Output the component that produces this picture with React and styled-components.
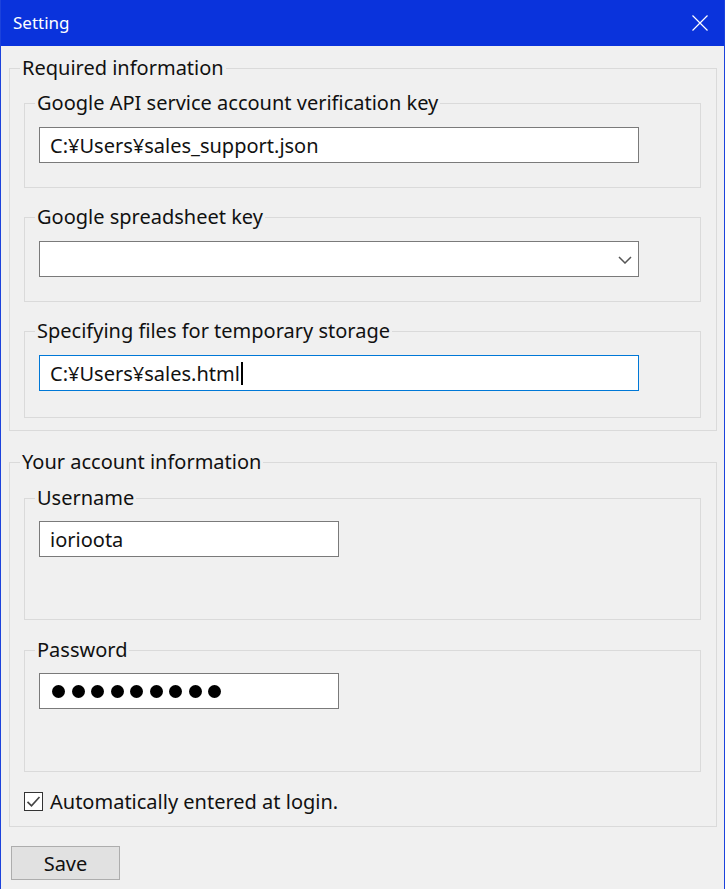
import styled, { createGlobalStyle } from 'styled-components';

////////////////////////////////////////////////////
//////////////////// COMPONENT /////////////////////
////////////////////////////////////////////////////
export default function App() {
   return (
      <>
         <GlobalStyle />
         <Window>
            <TitleBar>
               <Title>Setting</Title>
               <CloseBtn aria-label="Close">
                  <svg width="16" height="16" viewBox="0 0 16 16">
                     <path d="M0.5 0.5L15.5 15.5M15.5 0.5L0.5 15.5" stroke="#fff" strokeWidth="1.2" />
                  </svg>
               </CloseBtn>
            </TitleBar>
            <Body>
               <Group $pad="11px 15px 12px 14px">
                  <Legend>Required information</Legend>
                  <Stack $gap={17}>
                     <Group $pad="12px 14px 24px 14px">
                        <Legend>Google API service account verification key</Legend>
                        <Field $width={600}>C:¥Users¥sales_support.json</Field>
                     </Group>
                     <Group $pad="12px 14px 24px 14px">
                        <Legend>Google spreadsheet key</Legend>
                        <Field $width={600}>
                           <Chevron width="14" height="8" viewBox="0 0 14 8">
                              <path d="M1 1L7 7L13 1" fill="none" stroke="#555" strokeWidth="1.5" />
                           </Chevron>
                        </Field>
                     </Group>
                     <Group $pad="12px 14px 26px 14px">
                        <Legend>Specifying files for temporary storage</Legend>
                        <Field $width={600} $focused>C:¥Users¥sales.html<Caret /></Field>
                     </Group>
                  </Stack>
               </Group>

               <Group $pad="12px 15px 13px 14px" $mt={19}>
                  <Legend>Your account information</Legend>
                  <Stack $gap={18}>
                     <Group $pad="11px 14px 62px 14px">
                        <Legend>Username</Legend>
                        <Field $width={300}>iorioota</Field>
                     </Group>
                     <Group $pad="11px 14px 62px 14px">
                        <Legend>Password</Legend>
                        <Field $width={300}>
                           <Dots>
                              {Array.from({ length: 9 }).map((_, i) => <Dot key={i} />)}
                           </Dots>
                        </Field>
                     </Group>
                  </Stack>
                  <CheckRow>
                     <CheckBox>
                        <svg width="15" height="13" viewBox="0 0 15 13">
                           <path d="M1.5 6.8L5.5 10.8L13.5 2" fill="none" stroke="#444" strokeWidth="1.7" />
                        </svg>
                     </CheckBox>
                     Automatically entered at login.
                  </CheckRow>
               </Group>

               <SaveButton>Save</SaveButton>
            </Body>
         </Window>
      </>
   );
}

////////////////////////////////////////////////////
//////////////// STYLED COMPONENTS /////////////////
////////////////////////////////////////////////////
const GlobalStyle = createGlobalStyle`
   html, body {
      margin: 0;
      padding: 0;
      background: #f0f0f0;
   }
   * {
      box-sizing: border-box;
   }
`;
const Window = styled.div`
   width: 725px;
   height: 889px;
   border-left: 1px solid #1c42dc;
   border-right: 1px solid #1c42dc;
   background: #f0f0f0;
   font-family: "Noto Sans", "Liberation Sans", sans-serif;
   font-size: 20px;
   color: #111;
   overflow: hidden;
`;
const TitleBar = styled.div`
   height: 46px;
   background: #0a33dc;
   display: flex;
   align-items: center;
   justify-content: space-between;
   padding: 0 16px 2px 12px;
`;
const Title = styled.div`
   color: #fff;
   font-size: 17px;
`;
const CloseBtn = styled.div`
   width: 16px;
   height: 16px;
   display: flex;
   margin-top: 1px;
`;
const Body = styled.div`
   padding: 10px 7px 0 8px;
`;
const Group = styled.fieldset`
   margin: ${({$mt}) => $mt || 0}px 0 0 0;
   padding: ${({$pad}) => $pad};
   border: 1px solid #dadada;
   min-width: 0;
`;
const Legend = styled.legend`
   padding: 0 2px;
   margin-left: -4px;
   line-height: 24px;
   height: 24px;
   font-size: 20px;
   color: #111;
`;
const Stack = styled.div`
   display: flex;
   flex-direction: column;
   gap: ${({$gap}) => $gap}px;
`;
const Field = styled.div`
   position: relative;
   width: ${({$width}) => $width}px;
   height: 36px;
   background: #fff;
   border: 1px solid ${({$focused}) => $focused ? '#0078d7' : '#7a7a7a'};
   display: flex;
   align-items: center;
   padding: 0 10px;
   font-size: 20px;
   color: #111;
`;
const Caret = styled.span`
   display: inline-block;
   width: 2px;
   height: 23px;
   background: #000;
   margin-left: 1px;
`;
const Chevron = styled.svg`
   position: absolute;
   right: 6px;
   top: 14px;
`;
const Dots = styled.div`
   display: flex;
   gap: 6.5px;
   padding-left: 2px;
`;
const Dot = styled.span`
   width: 13px;
   height: 13px;
   border-radius: 50%;
   background: #000;
`;
const CheckRow = styled.label`
   display: flex;
   align-items: center;
   gap: 7px;
   margin-top: 17px;
   height: 24px;
   font-size: 20px;
`;
const CheckBox = styled.span`
   width: 19px;
   height: 19px;
   border: 1px solid #333;
   background: #fff;
   display: flex;
   align-items: center;
   justify-content: center;
`;
const SaveButton = styled.button`
   margin-top: 19px;
   margin-left: 2px;
   width: 109px;
   height: 34px;
   background: #e1e1e1;
   border: 1px solid #adadad;
   font-family: inherit;
   font-size: 20px;
   color: #111;
   padding: 0;
`;
